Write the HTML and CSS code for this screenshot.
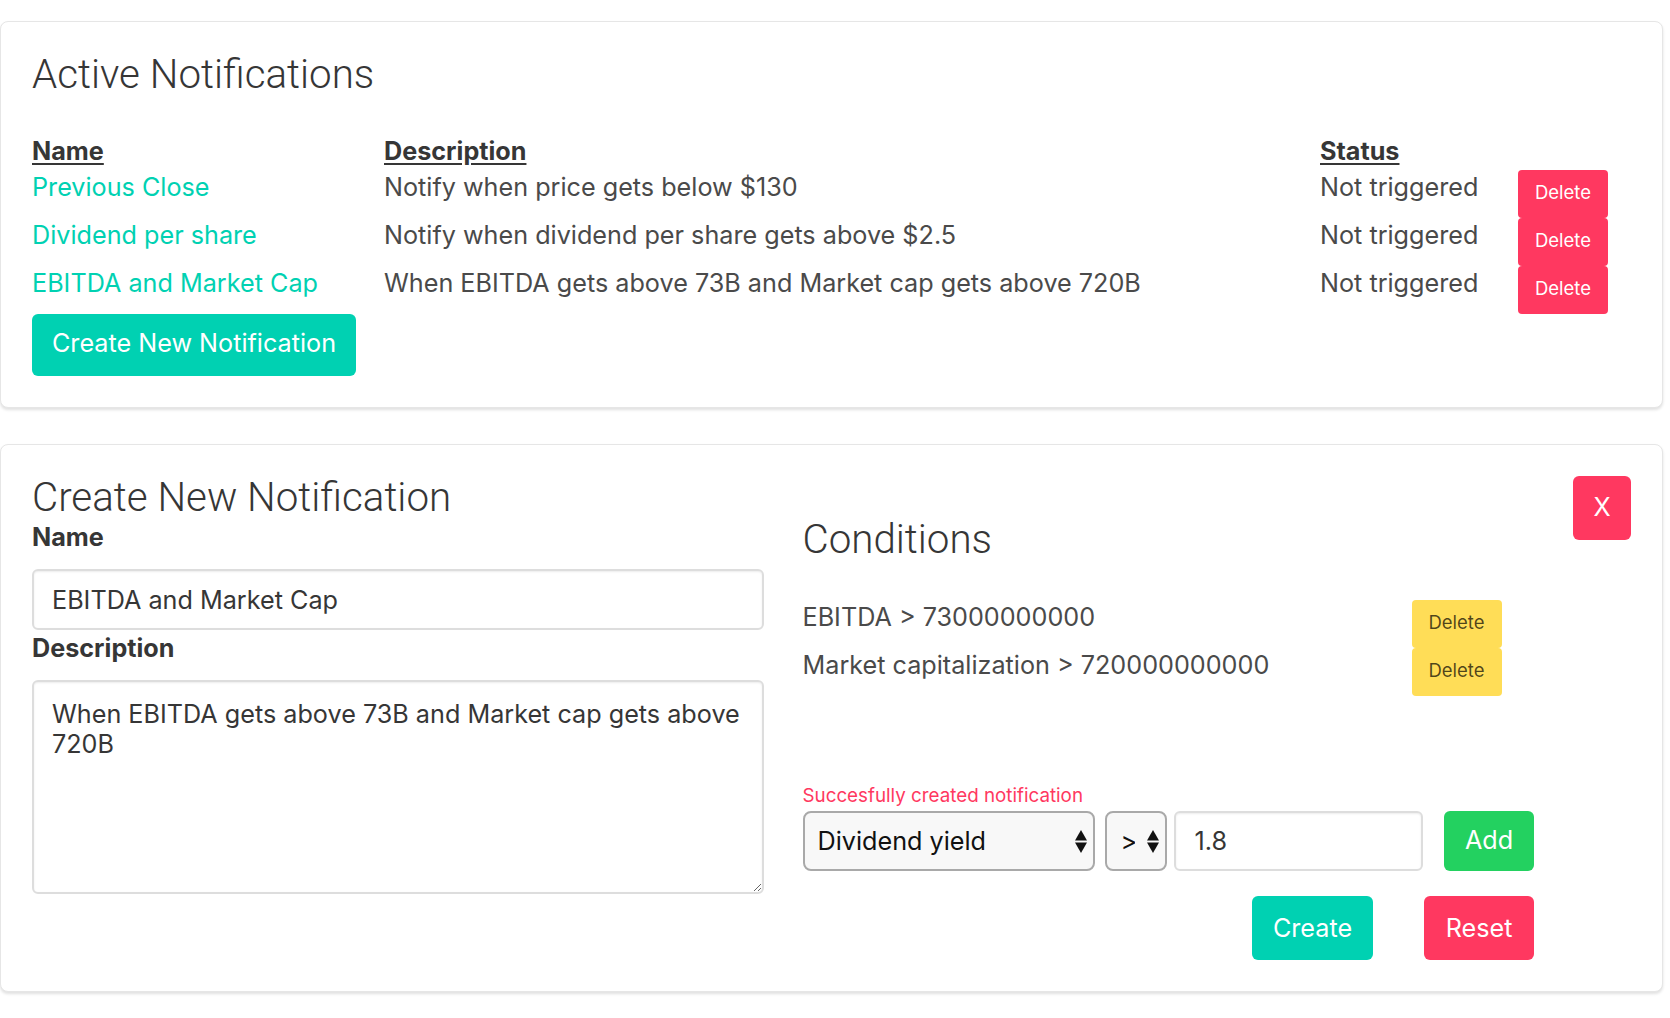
FILE: index.html
```html
<!DOCTYPE html>
<html lang="en">
<head>
<meta charset="utf-8">
<title>Notifications</title>
<link rel="stylesheet" href="styles.css">
</head>
<body>
<main class="page">
  <section class="box box-active">
    <h1 class="title title-active">Active Notifications</h1>
    <div class="ntable">
      <div class="th">Name</div>
      <div class="th">Description</div>
      <div class="th">Status</div>
      <div class="th"></div>

      <a class="cell link" href="#">Previous Close</a>
      <div class="cell">Notify when price gets below $130</div>
      <div class="cell">Not triggered</div>
      <div class="cell-btn"><button class="btn btn-danger btn-small">Delete</button></div>

      <a class="cell link" href="#">Dividend per share</a>
      <div class="cell">Notify when dividend per share gets above $2.5</div>
      <div class="cell">Not triggered</div>
      <div class="cell-btn"><button class="btn btn-danger btn-small">Delete</button></div>

      <a class="cell link" href="#">EBITDA and Market Cap</a>
      <div class="cell">When EBITDA gets above 73B and Market cap gets above 720B</div>
      <div class="cell">Not triggered</div>
      <div class="cell-btn"><button class="btn btn-danger btn-small">Delete</button></div>
    </div>
    <button class="btn btn-primary btn-big">Create New Notification</button>
  </section>

  <section class="box box-create">
    <div class="col col-left">
      <h2 class="title title-create">Create New Notification</h2>
      <label class="label" for="nname">Name</label>
      <input class="input input-name" id="nname" type="text" value="EBITDA and Market Cap">
      <label class="label" for="ndesc">Description</label>
      <textarea class="textarea" id="ndesc">When EBITDA gets above 73B and Market cap gets above 720B</textarea>
    </div>

    <div class="col col-right">
      <h2 class="title title-conditions">Conditions</h2>
      <div class="cond-list">
        <div class="cond-text">EBITDA &gt; 73000000000</div>
        <button class="btn btn-warning btn-small">Delete</button>
        <div class="cond-text">Market capitalization &gt; 720000000000</div>
        <button class="btn btn-warning btn-small">Delete</button>
      </div>
      <p class="help">Succesfully created notification</p>
      <div class="controls">
        <div class="select-wrap select-wide">
          <select class="select"><option>Dividend yield</option></select>
          <svg class="arrows" viewBox="0 0 12 23" width="12" height="23" aria-hidden="true"><polygon points="0,10.5 6,0 12,10.5" fill="#111"/><polygon points="0,12.5 12,12.5 6,23" fill="#111"/></svg>
        </div>
        <div class="select-wrap select-narrow">
          <select class="select"><option>&gt;</option></select>
          <svg class="arrows" viewBox="0 0 12 23" width="12" height="23" aria-hidden="true"><polygon points="0,10.5 6,0 12,10.5" fill="#111"/><polygon points="0,12.5 12,12.5 6,23" fill="#111"/></svg>
        </div>
        <input class="input input-value" type="text" value="1.8">
        <button class="btn btn-success btn-add">Add</button>
      </div>
      <div class="actions">
        <button class="btn btn-primary btn-action btn-create">Create</button>
        <button class="btn btn-danger btn-action btn-reset">Reset</button>
      </div>
    </div>

    <div class="col col-close">
      <button class="btn btn-danger btn-close">X</button>
    </div>
  </section>
</main>
</body>
</html>
```

FILE: styles.css
```css
* { box-sizing: border-box; }

html, body {
  margin: 0;
  padding: 0;
  background: #ffffff;
}

body {
  font-family: Inter, "Noto Sans", "Liberation Sans", sans-serif;
  font-size: 25.2px;
  color: #4a4a4a;
}

.page {
  padding: 21px 7px 26px 0;
}

.box {
  background: #ffffff;
  border: 1px solid #e6e6e6;
  border-radius: 8px;
  box-shadow: 0 2px 3px rgba(10, 10, 10, 0.12);
}

.box-active {
  padding: 29px 31px 31px 31px;
}

.box-create {
  margin-top: 36px;
  padding: 29px 31px 31px 31px;
  display: grid;
  grid-template-columns: minmax(0, 1fr) minmax(0, 1fr) 58px;
  column-gap: 39px;
  align-items: start;
}

.title {
  margin: 0;
  color: #363636;
  font-family: Roboto, Inter, sans-serif;
  font-weight: 300;
  font-size: 40.3px;
}

.title-active {
  line-height: 46px;
  margin-top: 1px;
  margin-bottom: 36px;
}

.title-create {
  line-height: 42px;
  margin-top: 3px;
}

.title-conditions {
  line-height: 42px;
  margin-top: 45px;
  margin-bottom: 39px;
}

/* table of notifications */
.ntable {
  display: grid;
  grid-template-columns: 352px 936px 198px 90px;
}

.th {
  font-weight: 700;
  color: #363636;
  text-decoration: underline;
  text-underline-offset: 3px;
  line-height: 34px;
  padding-bottom: 2px;
}

.cell {
  line-height: 34px;
  height: 48px;
}

.link {
  color: #00d1b2;
  text-decoration: none;
}

.cell-btn {
  height: 48px;
}

/* buttons */
.btn {
  font-family: inherit;
  border: none;
  color: #ffffff;
  cursor: pointer;
  display: inline-flex;
  align-items: center;
  justify-content: center;
  padding: 0;
  margin: 0;
}

.btn-primary { background: #00d1b2; }
.btn-danger { background: #ff3860; }
.btn-success { background: #23d160; }
.btn-warning { background: #ffdd57; color: rgba(0, 0, 0, 0.7); }

.btn-small {
  width: 90px;
  height: 48px;
  padding-bottom: 4px;
  font-size: 18.5px;
  border-radius: 4px;
}

.btn-big {
  width: 324px;
  height: 62px;
  padding-bottom: 4px;
  font-size: 25.2px;
  border-radius: 6px;
}

/* create form */
.label {
  display: block;
  font-weight: 700;
  color: #363636;
  line-height: 36px;
  margin-bottom: 14px;
}

.input,
.textarea {
  font-family: inherit;
  font-size: 25.2px;
  color: #363636;
  background: #ffffff;
  border: 2px solid #dddddd;
  border-radius: 6px;
  box-shadow: inset 0 1px 2px rgba(10, 10, 10, 0.08);
  outline: none;
}

.input-name {
  display: block;
  width: 100%;
  height: 61px;
  margin-top: 2px;
  padding: 0 18px;
}

.textarea {
  display: block;
  width: 100%;
  height: 214px;
  padding: 17px 4px 10px 18px;
  line-height: 30px;
  resize: vertical;
}

.cond-list {
  display: grid;
  grid-template-columns: 609px 90px;
}

.cond-text {
  line-height: 34px;
  height: 48px;
}

.help {
  margin: 86px 0 2px 0;
  font-size: 18.8px;
  line-height: 27px;
  color: #ff3860;
}

.controls {
  display: flex;
  align-items: stretch;
  height: 60px;
}

.select-wrap {
  position: relative;
  height: 60px;
}

.select-wide { width: 292px; margin-right: 10px; }
.select-narrow { width: 62px; margin-right: 7px; }

.select {
  appearance: none;
  -webkit-appearance: none;
  width: 100%;
  height: 100%;
  font-family: inherit;
  font-size: 25.2px;
  color: #111111;
  background: #f8f8f8;
  border: 2px solid #a9a9a9;
  border-radius: 8px;
  padding: 0 30px 0 13px;
  outline: none;
}

.select-narrow .select {
  padding-left: 14px;
}

.arrows {
  position: absolute;
  right: 8px;
  top: 19px;
  pointer-events: none;
}

.input-value {
  flex: 1;
  min-width: 0;
  height: 60px;
  padding: 0 19px;
  margin-right: 21px;
}

.btn-add {
  width: 90px;
  height: 60px;
  padding-bottom: 3px;
  font-size: 25.2px;
  border-radius: 6px;
}

.actions {
  display: flex;
  justify-content: flex-end;
  gap: 51px;
  margin-top: 25px;
}

.btn-action {
  height: 64px;
  font-size: 25.2px;
  border-radius: 6px;
}

.btn-create { width: 121px; }
.btn-reset { width: 110px; }

.col-close {
  padding-top: 2px;
}

.btn-close {
  width: 58px;
  height: 64px;
  padding-bottom: 2px;
  font-size: 25.2px;
  border-radius: 6px;
}
```
